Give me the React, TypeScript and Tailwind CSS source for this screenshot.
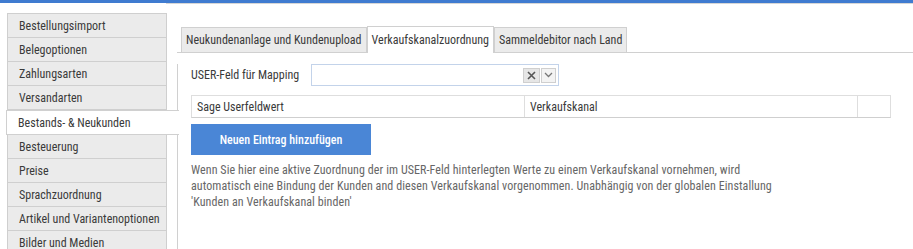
import React, { useState } from 'react';

const menuItems = [
  'Bestellungsimport',
  'Belegoptionen',
  'Zahlungsarten',
  'Versandarten',
  'Bestands- & Neukunden',
  'Besteuerung',
  'Preise',
  'Sprachzuordnung',
  'Artikel und Variantenoptionen',
  'Bilder und Medien'
];

const tabs = ['Neukundenanlage und Kundenupload', 'Verkaufskanalzuordnung', 'Sammeldebitor nach Land'];

const App = () => {
  const [activeMenu, setActiveMenu] = useState(4);
  const [activeTab, setActiveTab] = useState(1);

  return (
    <div className="w-[913px] h-[249px] overflow-hidden bg-white text-[12px] text-[#3a3a3a] font-['Roboto',sans-serif] font-stretch-condensed whitespace-nowrap">
      {/* Top bar */}
      <div className="h-[3px] bg-[#3f7bd0]" />

      <div className="flex">
        {/* Sidebar */}
        <div className="w-[178px] pt-[10px] pl-[6px] shrink-0">
          {menuItems.map((item, i) =>
            i === activeMenu ? (
              <div
                key={item}
                className="h-[25px] flex items-center pl-[11px] bg-white border-l border-t border-b border-[#d0d0d0] -mr-px relative z-10"
                onClick={() => setActiveMenu(i)}
              >
                {item}
              </div>
            ) : (
              <div
                key={item}
                className="h-[25px] w-[160px] ml-px flex items-center pl-[11px] bg-[#ebebeb] border border-[#cfcfcf] -mt-px first:mt-0 cursor-pointer"
                onClick={() => setActiveMenu(i)}
              >
                {item}
              </div>
            )
          )}
        </div>

        {/* Content */}
        <div className="flex-1 pt-[9px] border-t border-[#d6d6d6] -ml-[12px] pl-[12px]">
          {/* Tabs */}
          <div className="flex items-end pl-[4px] pt-[12px] h-[40px] border-b border-[#d0d0d0] -ml-px">
            {tabs.map((t, i) => (
              <button
                key={t}
                onClick={() => setActiveTab(i)}
                className={
                  i === activeTab
                    ? 'h-[27px] px-[4px] bg-white border border-b-0 border-[#d0d0d0] -mb-px relative z-10 text-[#3a3a3a]'
                    : 'h-[25px] px-[4px] bg-[#ebebeb] border border-[#d0d0d0] border-b-0 text-[#3a3a3a]'
                }
              >
                {t}
              </button>
            ))}
          </div>

          {/* Panel */}
          <div className="border-l border-[#d0d0d0] -ml-px h-[200px] pl-[13px] pr-[20px]">
            <div className="flex items-center h-[22px] mt-[11px]">
              <span className="w-[120px]">USER-Feld für Mapping</span>
              <div className="w-[248px] h-[22px] border border-[#c3d3ea] flex items-center justify-end pr-[2px] gap-px">
                <span className="w-[17px] h-[15px] bg-[#e6e6e6] border border-[#cfcfcf] flex items-center justify-center">
                  <svg width="9" height="9" viewBox="0 0 9 9">
                    <path d="M1 1L8 8M8 1L1 8" stroke="#555" strokeWidth="1.6" />
                  </svg>
                </span>
                <span className="w-[15px] h-[15px] bg-[#f3f3f3] border border-[#cfcfcf] flex items-center justify-center">
                  <svg width="9" height="6" viewBox="0 0 9 6">
                    <path d="M1 1L4.5 4.5L8 1" stroke="#777" strokeWidth="1.3" fill="none" />
                  </svg>
                </span>
              </div>
            </div>

            <div className="flex w-[700px] h-[23px] mt-[9px] border border-[#dedede] border-b-[#cfcfcf]">
              <div className="w-[333px] border-r border-[#dedede] flex items-center pl-[5px]">Sage Userfeldwert</div>
              <div className="w-[333px] border-r border-[#dedede] flex items-center pl-[5px]">Verkaufskanal</div>
              <div className="flex-1" />
            </div>

            <button className="w-[180px] h-[31px] mt-[6px] bg-[#4a86d6] text-white text-[12px] font-medium">
              Neuen Eintrag hinzufügen
            </button>

            <p className="mt-[7px] text-[#666] leading-[16px] tracking-[0.08px]">
              Wenn Sie hier eine aktive Zuordnung der im USER-Feld hinterlegten Werte zu einem Verkaufskanal vornehmen, wird
              <br />
              automatisch eine Bindung der Kunden and diesen Verkaufskanal vorgenommen. Unabhängig von der globalen Einstallung
              <br />
              'Kunden an Verkaufskanal binden'
            </p>
          </div>
        </div>
      </div>
    </div>
  );
};

export default App;
